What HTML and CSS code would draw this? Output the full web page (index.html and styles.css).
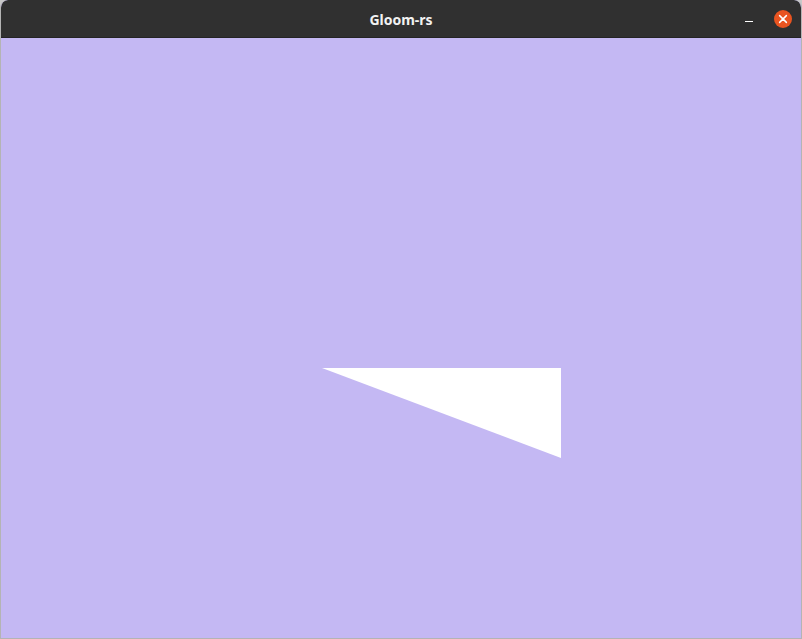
FILE: index.html
```html
<!DOCTYPE html>
<html>
<head>
<meta charset="utf-8">
<title>Gloom-rs</title>
<link rel="stylesheet" href="styles.css">
</head>
<body>
<div class="window">
  <div class="titlebar">
    <div class="title">Gloom-rs</div>
    <div class="controls">
      <div class="btn-min"><span class="min-bar"></span></div>
      <div class="btn-close">
        <svg width="18" height="18" viewBox="0 0 18 18">
          <circle cx="9" cy="9" r="9" fill="#e95420"/>
          <path d="M5.6 5.6 L12.4 12.4 M12.4 5.6 L5.6 12.4" stroke="#ffffff" stroke-width="1.5" stroke-linecap="round"/>
        </svg>
      </div>
    </div>
  </div>
  <div class="content">
    <svg class="scene" width="800" height="600" viewBox="0 0 800 600">
      <polygon points="321,330 560,330 560,420" fill="#ffffff"/>
    </svg>
  </div>
</div>
</body>
</html>
```

FILE: styles.css
```css
html, body {
  margin: 0;
  padding: 0;
  background: #c8c8c8;
}
.window {
  width: 802px;
  height: 639px;
  box-sizing: border-box;
  display: flex;
  flex-direction: column;
  border-left: 1px solid #b4b4b4;
  border-right: 1px solid #b4b4b4;
  border-bottom: 1px solid #b4b4b4;
  border-radius: 8px 8px 0 0;
  overflow: hidden;
  background: #c4b8f3;
}
.titlebar {
  height: 37px;
  flex: 0 0 37px;
  background: #303030;
  border-bottom: 1px solid #242424;
  border-radius: 7px 7px 0 0;
  display: flex;
  align-items: center;
  justify-content: center;
  position: relative;
}
.title {
  font-family: "Noto Sans", "DejaVu Sans", sans-serif;
  font-weight: bold;
  font-size: 14px;
  color: #f2f2f2;
  margin-top: 2px;
}
.controls {
  position: absolute;
  right: 9px;
  top: 10px;
  display: flex;
  align-items: center;
  gap: 20px;
}
.btn-min {
  width: 10px;
  height: 18px;
  position: relative;
}
.min-bar {
  position: absolute;
  left: 1px;
  top: 11px;
  width: 8px;
  height: 1px;
  background: #ffffff;
}
.btn-close {
  width: 18px;
  height: 18px;
}
.btn-close svg {
  display: block;
}
.content {
  flex: 1;
  position: relative;
  background: #c4b8f3;
}
.scene {
  display: block;
}
```
